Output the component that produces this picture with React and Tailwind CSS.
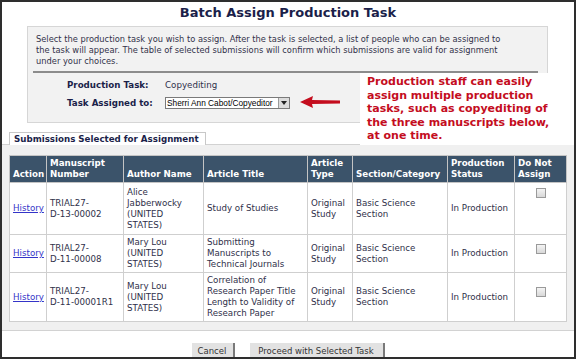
import React from 'react';

const rows = [
  {
    num: ['TRIAL27-', 'D-13-00002'],
    author: ['Alice', 'Jabberwocky', '(UNITED', 'STATES)'],
    title: ['Study of Studies'],
    h: 'h-[52px]',
    cb: 'pt-[5px]',
  },
  {
    num: ['TRIAL27-', 'D-11-00008'],
    author: ['Mary Lou', '(UNITED', 'STATES)'],
    title: ['Submitting', 'Manuscripts to', 'Technical Journals'],
    h: 'h-[38px]',
    cb: 'pt-[9px]',
  },
  {
    num: ['TRIAL27-', 'D-11-00001R1'],
    author: ['Mary Lou', '(UNITED', 'STATES)'],
    title: ['Correlation of', 'Research Paper Title', 'Length to Validity of', 'Research Paper'],
    h: 'h-[49px]',
    cb: 'pt-[14px]',
  },
];

const Lines = ({ items }) => (
  <>
    {items.map((t, i) => (
      <div key={i}>{t}</div>
    ))}
  </>
);

const Checkbox = () => (
  <div className="mx-auto h-[10px] w-[10px] border border-[#9a9a9a] bg-gradient-to-b from-[#f4f4f4] to-[#d8d8d8]"></div>
);

const App = () => {
  return (
    <div className="relative box-border h-[359px] w-[576px] overflow-hidden border-2 border-[#2e2e2e] bg-white font-['DejaVu_Sans',sans-serif] text-[#30304a]">
      {/* Title */}
      <div className="pt-[3px] text-center text-[13px] font-bold leading-[16px] text-[#1b1f4a]">
        Batch Assign Production Task
      </div>

      {/* Instructions panel */}
      <div className="ml-[25px] mt-[5px] w-[521px] border border-[#d6d6d6] bg-[#f2f2f2] pb-[13px] pt-[7px]">
        <p className="pl-[8px] text-[8.3px] leading-[11px] text-[#33334a]">
          Select the production task you wish to assign. After the task is selected, a list of people who can be assigned to
          <br />
          the task will appear. The table of selected submissions will confirm which submissions are valid for assignment
          <br />
          under your choices.
        </p>
        <div className="ml-[5px] mr-[9px] mt-[4px] h-[2px] bg-[#8c8c8c]"></div>
        <div className="ml-[39px] mt-[6px] flex items-center text-[8.7px] leading-[12px]">
          <span className="w-[98px] font-bold text-[#1b1f4a]">Production Task:</span>
          <span>Copyediting</span>
        </div>
        <div className="ml-[39px] mt-[6px] flex items-center text-[8.7px] leading-[12px]">
          <span className="w-[98px] font-bold text-[#1b1f4a]">Task Assigned to:</span>
          <div className="flex h-[12px] w-[125px] items-center border border-[#7a7a7a] bg-white">
            <span className="flex-1 truncate pl-[1px] font-['Liberation_Sans',sans-serif] text-[8.3px] leading-[10px] text-black">
              Sherri Ann Cabot/Copyeditor
            </span>
            <span className="flex h-[10px] w-[11px] items-center justify-center border-l border-[#9a9a9a] bg-[#dcdcdc]">
              <svg width="6" height="4" viewBox="0 0 6 4">
                <polygon points="0,0 6,0 3,4" fill="#222" />
              </svg>
            </span>
          </div>
        </div>
      </div>

      {/* Callout annotation */}
      <div className="absolute left-[358px] top-[71px] h-[72px] w-[216px] bg-white pl-[7px] pt-[2px] text-[11px] font-bold leading-[13.5px] text-[#c40d1e]">
        Production staff can easily
        <br />
        assign multiple production
        <br />
        tasks, such as copyediting of
        <br />
        the three manuscripts below,
        <br />
        at one time.
      </div>
      <svg className="absolute left-[298px] top-[93px]" width="42" height="14" viewBox="0 0 42 14">
        <polygon points="0,7 13,1 12,5 40,5.5 40,8.5 12,9 13,13" fill="#c40d1e" />
      </svg>

      {/* Submissions tab */}
      <div className="relative z-10 -mb-px ml-[7px] mt-[9px] w-[197px] border-x border-t border-[#c8c8c8] bg-white pl-[4px] text-[8.7px] font-bold leading-[12px] text-[#1b1f4a]">
        Submissions Selected for Assignment
      </div>

      <div className="border-y border-[#d2d2d2] bg-[#f0f0f0] pb-[8px] pl-[7px] pt-[10px]">
        <table className="w-[557px] table-fixed border-collapse text-[8.7px] leading-[11px]">
          <colgroup>
            <col className="w-[37px]" />
            <col className="w-[77px]" />
            <col className="w-[80px]" />
            <col className="w-[104px]" />
            <col className="w-[45px]" />
            <col className="w-[95px]" />
            <col className="w-[67px]" />
            <col className="w-[52px]" />
          </colgroup>
          <thead>
            <tr className="h-[27px] bg-[#3b536a] text-left align-bottom font-bold text-white">
              <th className="border border-[#c4c4c4] px-[3px] pb-[2px]">Action</th>
              <th className="border border-[#c4c4c4] px-[3px] pb-[2px]">Manuscript Number</th>
              <th className="border border-[#c4c4c4] px-[3px] pb-[2px]">Author Name</th>
              <th className="border border-[#c4c4c4] px-[3px] pb-[2px]">Article Title</th>
              <th className="border border-[#c4c4c4] px-[3px] pb-[2px]">Article Type</th>
              <th className="border border-[#c4c4c4] px-[3px] pb-[2px]">Section/Category</th>
              <th className="border border-[#c4c4c4] px-[3px] pb-[2px]">Production Status</th>
              <th className="border border-[#c4c4c4] px-[3px] pb-[2px]">Do Not Assign</th>
            </tr>
          </thead>
          <tbody className="bg-white">
            {rows.map((r, i) => (
              <tr key={i} className={r.h}>
                <td className="border border-[#cfcfcf] px-[3px] align-middle">
                  <a href="#" className="text-[#3434c8] underline">History</a>
                </td>
                <td className="border border-[#cfcfcf] px-[3px] align-middle">
                  <Lines items={r.num} />
                </td>
                <td className="border border-[#cfcfcf] px-[3px] align-middle">
                  <Lines items={r.author} />
                </td>
                <td className="border border-[#cfcfcf] px-[3px] align-middle">
                  <Lines items={r.title} />
                </td>
                <td className="border border-[#cfcfcf] px-[3px] align-middle">
                  <Lines items={['Original', 'Study']} />
                </td>
                <td className="border border-[#cfcfcf] px-[3px] align-middle">
                  <Lines items={['Basic Science', 'Section']} />
                </td>
                <td className="border border-[#cfcfcf] px-[3px] align-middle">In Production</td>
                <td className={`border border-[#cfcfcf] align-top ${r.cb}`}>
                  <Checkbox />
                </td>
              </tr>
            ))}
          </tbody>
        </table>
      </div>

      {/* Buttons */}
      <div className="mt-[12px] flex justify-center gap-[15px] text-[8.5px] leading-[14px] text-[#333]">
        <button className="h-[17px] w-[43px] border-b-2 border-r-2 border-[#7a7a7a] bg-[#e2e2e2]">Cancel</button>
        <button className="h-[17px] w-[135px] border-b-2 border-r-2 border-[#7a7a7a] bg-[#e2e2e2]">Proceed with Selected Task</button>
      </div>
    </div>
  );
};

export default App;
